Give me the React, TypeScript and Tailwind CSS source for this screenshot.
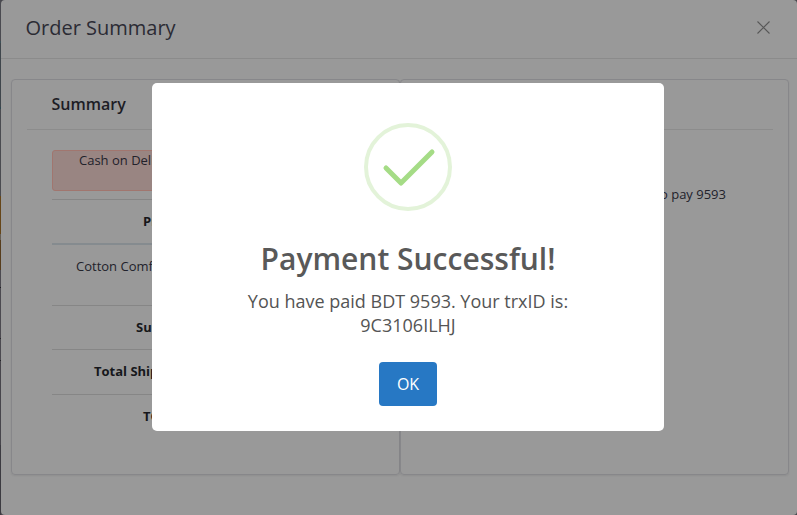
import React from "react";

const edge = [
  { c: "bg-[#4a4a50]", h: 41 },
  { c: "bg-[#3c5057]", h: 2 },
  { c: "bg-[#3f464c]", h: 64 },
  { c: "bg-[#2d4851]", h: 2 },
  { c: "bg-[#4a4b50]", h: 87 },
  { c: "bg-[#664618]", h: 38 },
  { c: "bg-[#665e54]", h: 6 },
  { c: "bg-[#573d1c]", h: 30 },
  { c: "bg-[#4c4a50]", h: 17 },
  { c: "bg-[#202024]", h: 1 },
  { c: "bg-[#4c4a50]", h: 50 },
  { c: "bg-[#29292d]", h: 1 },
  { c: "bg-[#4c4a50]", h: 21 },
  { c: "bg-[#242428]", h: 1 },
  { c: "bg-[#47454b]", h: 84 },
  { c: "bg-[#3c3b41]", h: 70 },
];

function Row({ label, className }: { label: string; className: string }) {
  return (
    <div className={`flex border-t border-[#868686] text-[13px] leading-5 font-bold text-[#16171b] ${className}`}>
      <span className="whitespace-nowrap">{label}</span>
    </div>
  );
}

function SummaryCard() {
  return (
    <section className="h-[396px] w-[389px] rounded-[4px] border border-[#87878a] px-[15px] shadow-[0_1px_2px_rgba(0,0,0,0.07)]">
      <h2 className="h-[50px] w-[373px] border-b border-[#8c8c8c] pt-3 pl-[24.5px] text-[16px] leading-6 font-semibold text-[#1d1d25]">
        Summary
      </h2>
      <div className="w-[323px] pt-5 ml-[25px] text-[13px] leading-5 text-[#22222b]">
        <div className="h-[41px] rounded-[3px] border border-[#a1766f] bg-[#998582] pl-[26px] leading-[18px]">
          Cash on Delivery
        </div>
        <div className="mt-2">
          <Row label="Product" className="h-[44px] pt-[11px] pl-[91px]" />
          <div className="h-[62px] border-t-2 border-[#858b8f] pt-[11px] pl-[24px] whitespace-nowrap">
            Cotton Comfort
          </div>
          <Row label="Subtotal" className="h-[44px] pt-[11px] pl-[84px]" />
          <Row label="Total Shipping" className="h-[45px] pt-[11px] pl-[42px]" />
          <Row label="TOTAL" className="h-[45px] pt-[11px] pl-[91px]" />
        </div>
      </div>
    </section>
  );
}

function PaymentCard() {
  return (
    <section className="h-[396px] w-[389px] rounded-[4px] border border-[#87878a] pr-[15px] pl-[14px] shadow-[0_1px_2px_rgba(0,0,0,0.07)]">
      <div className="h-[50px] border-b border-[#8c8c8c]" />
      <p className="pt-[54px] pr-[47px] text-right text-[13px] leading-5 text-[#22222b]">to pay 9593</p>
    </section>
  );
}

export default function App() {
  return (
    <div className="relative flex h-[515px] w-[797px] overflow-hidden bg-[#47464c] font-['Open_Sans','Noto_Sans',sans-serif]">
      <div className="w-px shrink-0">
        {edge.map((s, i) => (
          <div key={i} className={s.c} style={{ height: s.h }} />
        ))}
      </div>
      <main className="w-[796px] rounded-[4px] bg-[#999999]">
        <header className="flex h-[59px] justify-between border-b border-[#8b8b8b] pt-[13px] pr-[27px] pl-[24.5px]">
          <h1 className="text-[20px] leading-[30px] text-[#2b2b34]">Order Summary</h1>
          <svg className="mt-[8px] h-[14px] w-[14px]" viewBox="0 0 14 14" fill="none" stroke="#575757" strokeWidth="1.1">
            <path d="M1.5 0.5L13.5 12.5M13.5 0.5L1.5 12.5" />
          </svg>
        </header>
        <div className="flex pt-5 pl-[10px]">
          <SummaryCard />
          <PaymentCard />
        </div>
      </main>

      <div
        role="dialog"
        className="absolute top-[83px] left-[152px] flex h-[348px] w-[512px] flex-col items-center rounded-[5px] bg-white pt-10 text-center"
      >
        <svg className="h-[88px] w-[88px]" viewBox="0 0 88 88" fill="none">
          <circle cx="44" cy="44" r="42" stroke="#e3f3d9" strokeWidth="4" />
          <path d="M22 45L37 60L68 29" stroke="#a5dc86" strokeWidth="5" strokeLinecap="round" strokeLinejoin="round" />
        </svg>
        <h2 className="mt-[27px] text-[30px] leading-[42px] font-semibold whitespace-nowrap text-[#595959]">
          Payment Successful!
        </h2>
        <p className="mt-[9px] text-[18px] leading-6 text-[#545454]">
          You have paid BDT 9593. Your trxID is:
          <br />
          9C3106ILHJ
        </p>
        <button className="mt-[25px] h-[44px] w-[58px] rounded-[4px] bg-[#2778c4] text-[16px] leading-6 text-white">
          OK
        </button>
      </div>
    </div>
  );
}
